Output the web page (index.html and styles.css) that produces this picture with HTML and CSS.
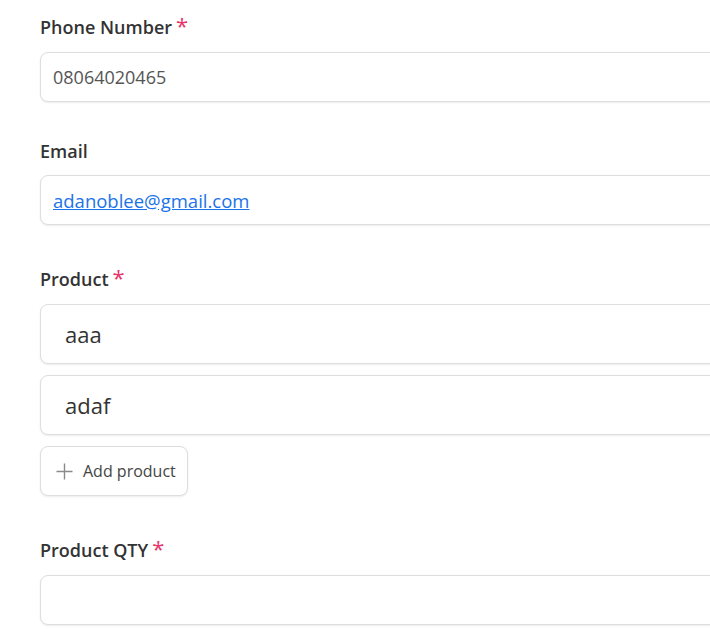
FILE: index.html
```html
<!DOCTYPE html>
<html lang="en">
<head>
  <meta charset="UTF-8">
  <meta name="viewport" content="width=device-width, initial-scale=1.0">
  <title>Order details</title>
  <link rel="stylesheet" href="styles.css">
</head>

<body>
  <form class="order-form">
    <!-- Phone -->
    <div class="field">
      <label class="field-label" for="phone">Phone Number<span class="required">*</span></label>
      <input class="text-input" type="text" id="phone" value="08064020465">
    </div>

    <!-- Email (read only link) -->
    <div class="field">
      <label class="field-label">Email</label>
      <div class="text-input link-box">
        <a href="#">adanoblee@gmail.com</a>
      </div>
    </div>

    <!-- Products -->
    <div class="field">
      <label class="field-label">Product<span class="required">*</span></label>
      <div class="product-list">
        <input class="text-input product-input" type="text" value="aaa">
        <input class="text-input product-input" type="text" value="adaf">
        <button type="button" class="add-btn">
          <svg width="17" height="17" viewBox="0 0 17 17" fill="none" stroke="#8a8a8a" stroke-width="1.4">
            <path d="M8.5 0.5v16M0.5 8.5h16"/>
          </svg>
          Add product
        </button>
      </div>
    </div>

    <!-- Quantity -->
    <div class="field">
      <label class="field-label" for="qty">Product QTY<span class="required">*</span></label>
      <input class="text-input" type="text" id="qty">
    </div>
  </form>
</body>
</html>
```

FILE: styles.css
```css
html,
body {
  overflow: hidden;
}

body {
  margin: 0;
  background: #ffffff;
  font-family: "Open Sans", "Noto Sans", sans-serif;
  color: #333;
}

.order-form {
  width: 720px;
  padding: 10px 0 0 40px;
}

.field {
  margin-bottom: 37px;
}

.field-label {
  display: block;
  font-size: 18px;
  font-weight: 600;
  color: #333;
  margin-bottom: 12px;
}

.required {
  color: #e8336a;
  font-size: 22px;
  font-weight: 400;
  margin-left: 4px;
}

.text-input {
  display: block;
  box-sizing: border-box;
  width: 100%;
  height: 50px;
  padding: 0 12px;
  border: 1px solid #dedede;
  border-radius: 8px;
  box-shadow: 0 1px 2px rgba(0, 0, 0, 0.08);
  background: #fff;
  font-family: inherit;
  font-size: 18px;
  color: #555;
  outline: none;
}

.link-box {
  display: flex;
  align-items: center;
  font-size: 18.5px;
}

.link-box a {
  color: #1a73e8;
}

.product-list {
  display: flex;
  flex-direction: column;
  align-items: flex-start;
  gap: 11px;
}

.product-input {
  height: 60px;
  padding: 0 24px;
  font-size: 22px;
  font-weight: 500;
  color: #333;
}

.add-btn {
  display: flex;
  align-items: center;
  gap: 10px;
  box-sizing: border-box;
  height: 50px;
  padding: 0 11px 0 15px;
  border: 1px solid #dedede;
  border-radius: 8px;
  box-shadow: 0 1px 2px rgba(0, 0, 0, 0.08);
  background: #fff;
  font-family: inherit;
  font-size: 16px;
  color: #444;
  cursor: pointer;
}
```
